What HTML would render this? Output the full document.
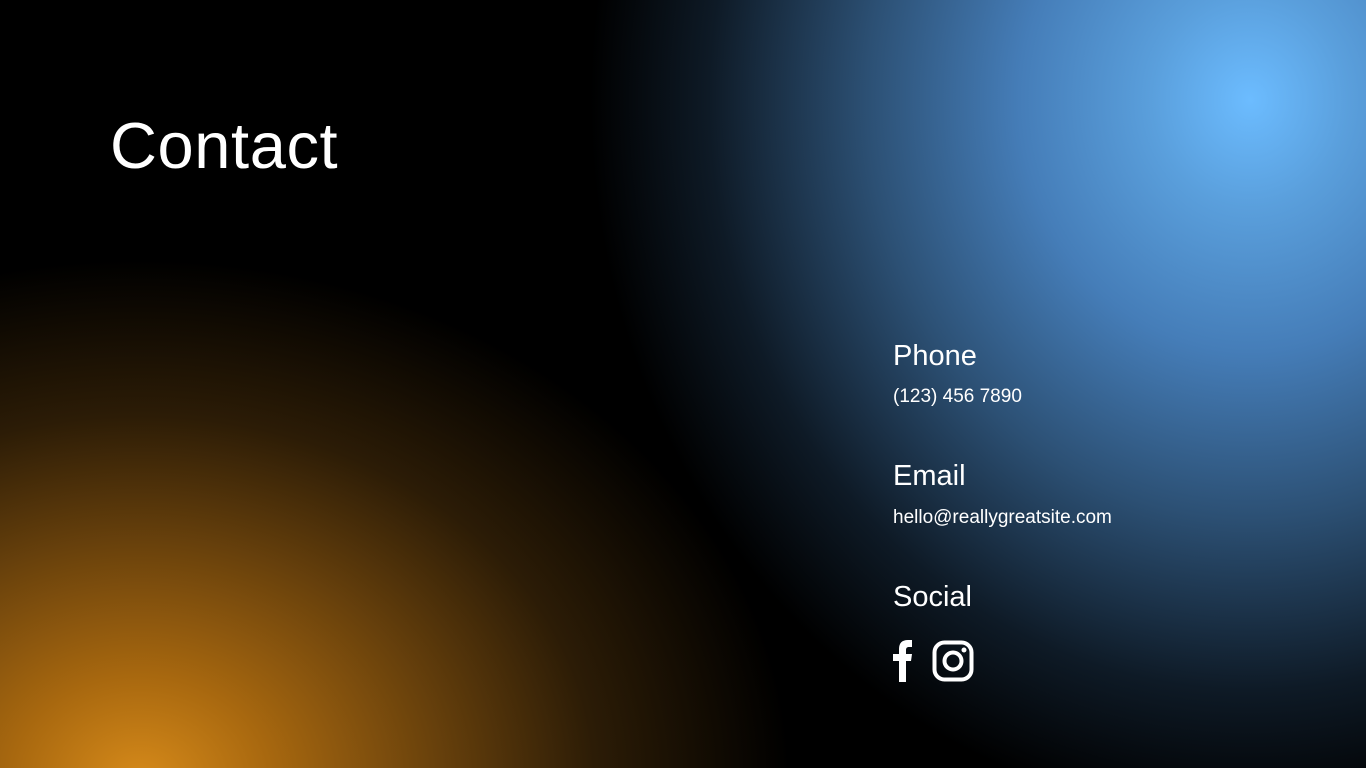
<!DOCTYPE html>
<html><head><style>
html,body{margin:0;padding:0}
body{width:1366px;height:768px;overflow:hidden;position:relative;background:#000;font-family:"Liberation Sans",sans-serif;color:#fff}
.bg{position:absolute;inset:0;background:
radial-gradient(ellipse 650px 520px at 140px 780px, #d68a1a 0%, #a8680f 20%, #6a420c 45%, #2c1c06 70%, rgba(0,0,0,0) 100%),
radial-gradient(ellipse 660px 720px at 1250px 100px, #6cbcff 0%, #5a9fdc 15%, #457db8 35%, #2c5074 58%, #0e1a26 82%, rgba(0,0,0,0) 100%);}
h1{position:absolute;left:110px;top:108px;margin:0;font-weight:400;font-size:65px;letter-spacing:0.6px}
.h{position:absolute;left:893px;font-size:29px}
.t{position:absolute;left:893px;font-size:19px}
</style></head><body>
<div class="bg"></div>
<h1>Contact</h1>
<div class="h" style="top:340px">Phone</div>
<div class="t" style="top:386px">(123) 456 7890</div>
<div class="h" style="top:460px">Email</div>
<div class="t" style="top:507px">hello@reallygreatsite.com</div>
<div class="h" style="top:581px">Social</div>
<svg style="position:absolute;left:893px;top:640px" width="20" height="42" viewBox="0 0 20 42"><path d="M6 42V21H0v-7h6V9c0-6 3-9 9-9h4v7h-3c-2 0-3 1-3 3v4h6l-1 7h-5v21z" fill="#fff"/></svg>
<svg style="position:absolute;left:932px;top:640px" width="42" height="42" viewBox="0 0 42 42"><rect x="2.5" y="2.5" width="37" height="37" rx="10" fill="none" stroke="#fff" stroke-width="4"/><circle cx="21" cy="21" r="8.5" fill="none" stroke="#fff" stroke-width="4"/><circle cx="32" cy="10" r="2.5" fill="#fff"/></svg>
</body></html>
